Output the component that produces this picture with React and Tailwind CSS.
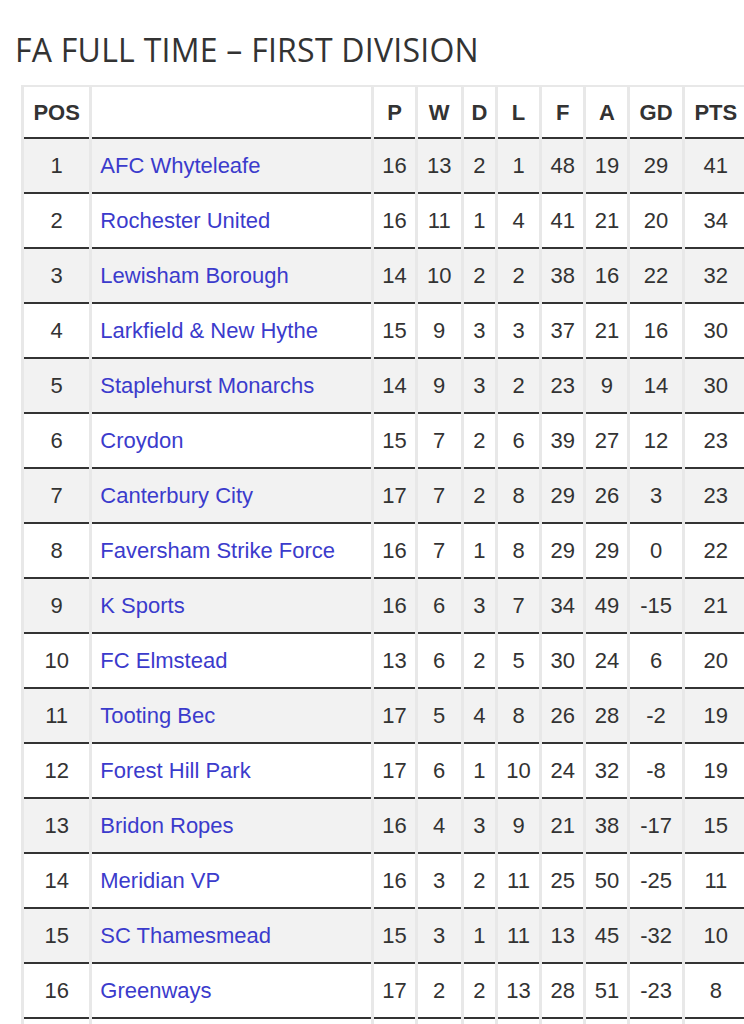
const rows = [
  [1, 'AFC Whyteleafe', 16, 13, 2, 1, 48, 19, 29, 41],
  [2, 'Rochester United', 16, 11, 1, 4, 41, 21, 20, 34],
  [3, 'Lewisham Borough', 14, 10, 2, 2, 38, 16, 22, 32],
  [4, 'Larkfield & New Hythe', 15, 9, 3, 3, 37, 21, 16, 30],
  [5, 'Staplehurst Monarchs', 14, 9, 3, 2, 23, 9, 14, 30],
  [6, 'Croydon', 15, 7, 2, 6, 39, 27, 12, 23],
  [7, 'Canterbury City', 17, 7, 2, 8, 29, 26, 3, 23],
  [8, 'Faversham Strike Force', 16, 7, 1, 8, 29, 29, 0, 22],
  [9, 'K Sports', 16, 6, 3, 7, 34, 49, -15, 21],
  [10, 'FC Elmstead', 13, 6, 2, 5, 30, 24, 6, 20],
  [11, 'Tooting Bec', 17, 5, 4, 8, 26, 28, -2, 19],
  [12, 'Forest Hill Park', 17, 6, 1, 10, 24, 32, -8, 19],
  [13, 'Bridon Ropes', 16, 4, 3, 9, 21, 38, -17, 15],
  [14, 'Meridian VP', 16, 3, 2, 11, 25, 50, -25, 11],
  [15, 'SC Thamesmead', 15, 3, 1, 11, 13, 45, -32, 10],
  [16, 'Greenways', 17, 2, 2, 13, 28, 51, -23, 8],
];

const cols = ['P', 'W', 'D', 'L', 'F', 'A', 'GD', 'PTS'];
const widths = ['w-[40px]', 'w-[43px]', 'w-[31px]', 'w-[41px]', 'w-[41px]', 'w-[41px]', 'w-[51px]', 'w-[62px]'];

const cell = 'border-b-2 border-[#333] text-center p-0';

export default function App() {
  return (
    <div className="w-[744px] h-[1024px] overflow-hidden bg-white font-[family-name:'Liberation_Sans',Arial,sans-serif] text-[#333]">
      {/* Title */}
      <h1 className="pl-[15px] pt-[31px] pb-[16px] font-[family-name:'Open_Sans',sans-serif] text-[32px] tracking-[0.25px] leading-[38px] font-normal text-[#333]">
        FA FULL TIME – FIRST DIVISION
      </h1>

      {/* League table */}
      <table className="ml-[21px] w-[729px] table-fixed border-separate border-spacing-x-[3px] border-spacing-y-0 border-t-2 border-[#e8e8e8] bg-[#e8e8e8] text-[22px]">
        <thead>
          <tr className="h-[52px] bg-white font-bold">
            <th className={`${cell} w-[65px]`}>POS</th>
            <th className={`${cell} w-[278px]`}></th>
            {cols.map((c, i) => (
              <th key={c} className={`${cell} ${widths[i]}`}>
                {c}
              </th>
            ))}
          </tr>
        </thead>
        <tbody>
          {rows.map((r, i) => (
            <tr key={r[0]} className={`h-[55px] ${i % 2 === 0 ? 'bg-[#f2f2f2]' : 'bg-white'}`}>
              <td className={cell}>{r[0]}</td>
              <td className={`${cell} text-left pl-[8px] text-[#3b3bcc]`}>{r[1]}</td>
              {r.slice(2).map((v, j) => (
                <td key={j} className={cell}>
                  {v}
                </td>
              ))}
            </tr>
          ))}
          <tr className="h-[55px] bg-white">
            {Array.from({ length: 10 }).map((_, j) => (
              <td key={j} className={cell}></td>
            ))}
          </tr>
        </tbody>
      </table>
    </div>
  );
}
